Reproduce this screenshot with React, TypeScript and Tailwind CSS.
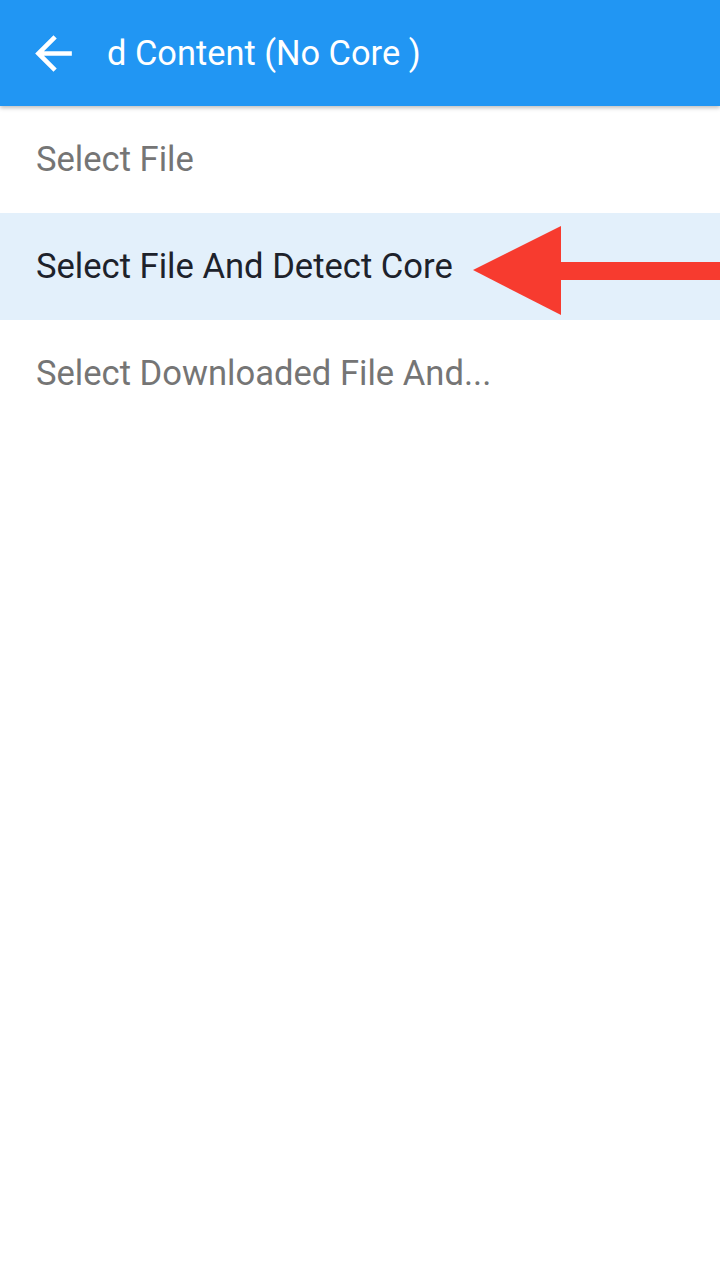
import React from "react";

export default function App() {
  const font = { fontFamily: "Roboto, 'Noto Sans', sans-serif" };
  return (
    <div className="relative w-[720px] h-[1280px] bg-white overflow-hidden" style={font}>
      <div className="relative z-10 h-[106px] bg-[#2196F3] flex items-center shadow-[0_2px_4px_rgba(0,0,0,0.25)]">
        <svg className="ml-[26px] w-[55px] h-[55px]" viewBox="0 0 24 24" fill="#ffffff">
          <path d="M20 11H7.83l5.59-5.59L12 4l-8 8 8 8 1.41-1.41L7.83 13H20v-2z" />
        </svg>
        <div className="ml-[26px] text-white text-[34.4px] leading-none">d Content (No Core )</div>
      </div>
      <div className="flex flex-col">
        <div className="h-[107px] flex items-center pl-[36px] text-[34.6px] text-[#757575]">Select File</div>
        <div className="relative h-[107px] flex items-center pl-[36px] text-[34.6px] text-[#1d222b] bg-[#E3F0FB]">
          Select File And Detect Core
          <svg className="absolute left-[472px] top-[13px]" width="248" height="89" viewBox="0 0 248 89">
            <polygon points="1,44 89,0 89,89" fill="#F73B2F" />
            <rect x="88" y="36" width="160" height="18" fill="#F73B2F" />
          </svg>
        </div>
        <div className="h-[107px] flex items-center pl-[36px] text-[34.6px] text-[#757575]">Select Downloaded File And...</div>
      </div>
    </div>
  );
}
